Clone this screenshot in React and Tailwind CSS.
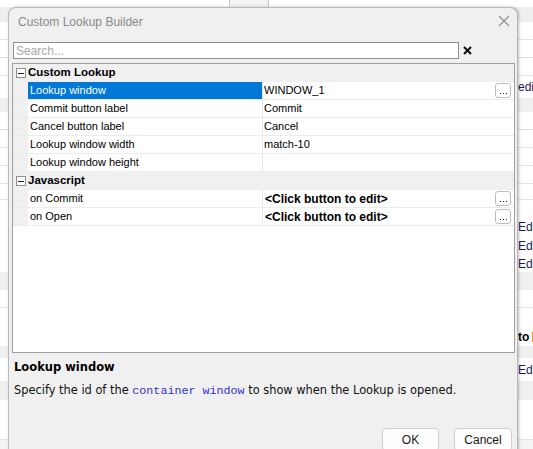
import { Fragment } from 'react';

// rows of the editor that sits behind the dialog (only its right edge shows)
const backRows = [
  { h: 'h-[15px]', cls: 'bg-[#efefef]' },
  { h: 'h-[18px]', cls: 'bg-white border-b border-[#e3e3e3]' },
  { h: 'h-[18px]', cls: 'bg-white border-b border-[#e3e3e3]' },
  { h: 'h-[18px]', cls: 'bg-white border-b border-[#e3e3e3]' },
  { h: 'h-[22px]', cls: 'bg-white', text: 'edit' },
  { h: 'h-[14px]', cls: 'bg-[#f0f0f0]' },
  { h: 'h-[18px]', cls: 'bg-white border-b border-[#e3e3e3]' },
  { h: 'h-[18px]', cls: 'bg-white border-b border-[#e3e3e3]' },
  { h: 'h-[18px]', cls: 'bg-white border-b border-[#e3e3e3]' },
  { h: 'h-[18px]', cls: 'bg-white border-b border-[#e3e3e3]' },
  { h: 'h-[16px]', cls: 'bg-white border-b border-[#e3e3e3]' },
  { h: 'h-[18px]', cls: 'bg-white' },
  { h: 'h-[18px]', cls: 'bg-white', text: 'Edit' },
  { h: 'h-[19px]', cls: 'bg-white', text: 'Edit' },
  { h: 'h-[17px]', cls: 'bg-white', text: 'Edit' },
  { h: 'h-[18px]', cls: 'bg-[#f0f0f0]' },
  { h: 'h-[18px]', cls: 'bg-white border-b border-[#e3e3e3]' },
  { h: 'h-[20px]', cls: 'bg-white' },
  { h: 'h-[18px]', cls: 'bg-white', text: 'to', bold: true },
  { h: 'h-[12px]', cls: 'bg-[#f0f0f0]' },
  { h: 'h-[23px]', cls: 'bg-white', text: 'Edit' },
  { h: 'h-[19px]', cls: 'bg-[#f0f0f0]' },
  { h: 'h-[40px]', cls: 'bg-white border-b border-[#e3e3e3]' },
];

const groups = [
  {
    name: 'Custom Lookup',
    props: [
      { label: 'Lookup window', value: 'WINDOW_1', button: true, selected: true },
      { label: 'Commit button label', value: 'Commit' },
      { label: 'Cancel button label', value: 'Cancel' },
      { label: 'Lookup window width', value: 'match-10' },
      { label: 'Lookup window height', value: '' },
    ],
  },
  {
    name: 'Javascript',
    props: [
      { label: 'on Commit', value: '<Click button to edit>', bold: true, button: true },
      { label: 'on Open', value: '<Click button to edit>', bold: true, button: true },
    ],
  },
];

function MinusBox() {
  return (
    <div className="w-[10px] h-[10px] border border-[#8f8f8f] bg-white flex items-center justify-center">
      <div className="w-[6px] h-[1px] bg-[#222]" />
    </div>
  );
}

function EllipsisButton() {
  return (
    <div className="w-[16px] h-[15px] mr-[3px] shrink-0 bg-white border border-[#bdbdbd] rounded-[3px] flex items-end justify-center pb-[3px] gap-[2px]">
      <span className="w-[1px] h-[1px] bg-[#1a1a40]" />
      <span className="w-[1px] h-[1px] bg-[#1a1a40]" />
      <span className="w-[1px] h-[1px] bg-[#1a1a40]" />
    </div>
  );
}

function PropertyRow({ p }) {
  return (
    <div className="flex h-[18px] border-b border-[#ececec]">
      <div className="w-[15px] shrink-0 bg-[#f0f0f0]" />
      <div
        className={`w-[234px] shrink-0 pl-[2px] flex items-center text-[11px] ${
          p.selected ? 'bg-[#0078d7] text-white' : 'bg-white text-black'
        }`}
      >
        {p.label}
      </div>
      <div className="w-[1px] shrink-0 bg-[#e6e6e6]" />
      <div className="flex-1 bg-white flex items-center pl-[1px]">
        <span className={`flex-1 ${p.bold ? 'font-bold text-[12px] pl-[1px]' : 'text-[11px]'} text-black`}>
          {p.value}
        </span>
        {p.button && <EllipsisButton />}
      </div>
    </div>
  );
}

export default function App() {
  return (
    <div className="relative w-[533px] h-[449px] overflow-hidden bg-[#f5f5f5] font-['Liberation_Sans',Arial,sans-serif]">
      {/* editor behind */}
      <div className="flex flex-col">
        <div className="h-[7px] flex bg-white">
          <div className="w-[230px] border-r border-[#c8c8c8]" />
          <div className="w-[39px] bg-[#f3f3f3] border-r border-[#c8c8c8]" />
          <div className="flex-1" />
        </div>
        {backRows.map((r, i) => (
          <div key={i} className={`${r.h} ${r.cls} flex items-center overflow-hidden`}>
            <div className="w-[518px] shrink-0" />
            {r.text && (
              <span className={`whitespace-nowrap text-[12px] ${r.bold ? 'font-bold text-black' : 'text-[#1b1b5e]'}`}>
                {r.text}
              </span>
            )}
            {r.bold && <span className="ml-[3px] w-[4px] h-[10px] shrink-0 bg-[#f39c12]" />}
          </div>
        ))}
      </div>

      {/* dialog window */}
      <div className="absolute left-[8px] top-[7px] w-[510px] h-[460px] bg-[#f0f0f0] border border-[#b9b9b9] rounded-t-[8px] shadow-[1px_0_3px_rgba(0,0,0,0.25)] flex flex-col">
        <div className="h-[27px] flex items-center pl-[9px] pr-[7px]">
          <span className="flex-1 text-[12px] text-[#8a8a8a]">Custom Lookup Builder</span>
          <svg width="12" height="12" viewBox="0 0 12 12" className="mt-[-1px]">
            <path d="M1 1 L11 11 M11 1 L1 11" stroke="#8c8c8c" strokeWidth="1.1" fill="none" />
          </svg>
        </div>

        {/* search */}
        <div className="mt-[7px] flex items-center pl-[4px]">
          <div className="w-[446px] h-[17px] bg-white border border-[#8f8f8f] flex items-center pl-[2px] text-[12px] text-[#a8a8a8]">
            Search...
          </div>
          <svg width="9" height="9" viewBox="0 0 9 9" className="ml-[4px]">
            <path d="M1 1 L8 8 M8 1 L1 8" stroke="#111" strokeWidth="2" fill="none" />
          </svg>
        </div>

        {/* property grid */}
        <div className="mt-[4px] ml-[3px] w-[503px] h-[290px] border border-[#a0a0a0] bg-white flex flex-col">
          {groups.map((g) => (
            <Fragment key={g.name}>
              <div className="h-[18px] bg-[#f0f0f0] flex items-center">
                <div className="w-[15px] shrink-0 flex justify-center">
                  <MinusBox />
                </div>
                <span className="text-[11.5px] font-bold text-black">{g.name}</span>
              </div>
              {g.props.map((p) => (
                <PropertyRow key={p.label} p={p} />
              ))}
            </Fragment>
          ))}
        </div>

        {/* description */}
        <div className="pl-[5px] pt-[7px] font-['DejaVu_Sans',Verdana,sans-serif] text-black">
          <div className="text-[11.5px] font-bold leading-[14px]">Lookup window</div>
          <div className="mt-[9px] text-[11.4px] leading-[14px] text-[#111] whitespace-nowrap">
            Specify the id of the{' '}
            <span className="font-['Liberation_Mono',monospace] text-[11.7px] text-[#3232d2]">container window</span>{' '}
            to show when the Lookup is opened.
          </div>
        </div>

        {/* buttons */}
        <div className="mt-[30px] flex justify-end gap-[15px] pr-[5px]">
          <div className="w-[57px] h-[23px] bg-[#fdfdfd] border border-[#cfcfcf] rounded-[4px] flex items-center justify-center text-[12px] text-[#1a1a1a]">
            OK
          </div>
          <div className="w-[58px] h-[23px] bg-[#fdfdfd] border border-[#cfcfcf] rounded-[4px] flex items-center justify-center text-[12px] text-[#1a1a1a]">
            Cancel
          </div>
        </div>
      </div>
    </div>
  );
}
